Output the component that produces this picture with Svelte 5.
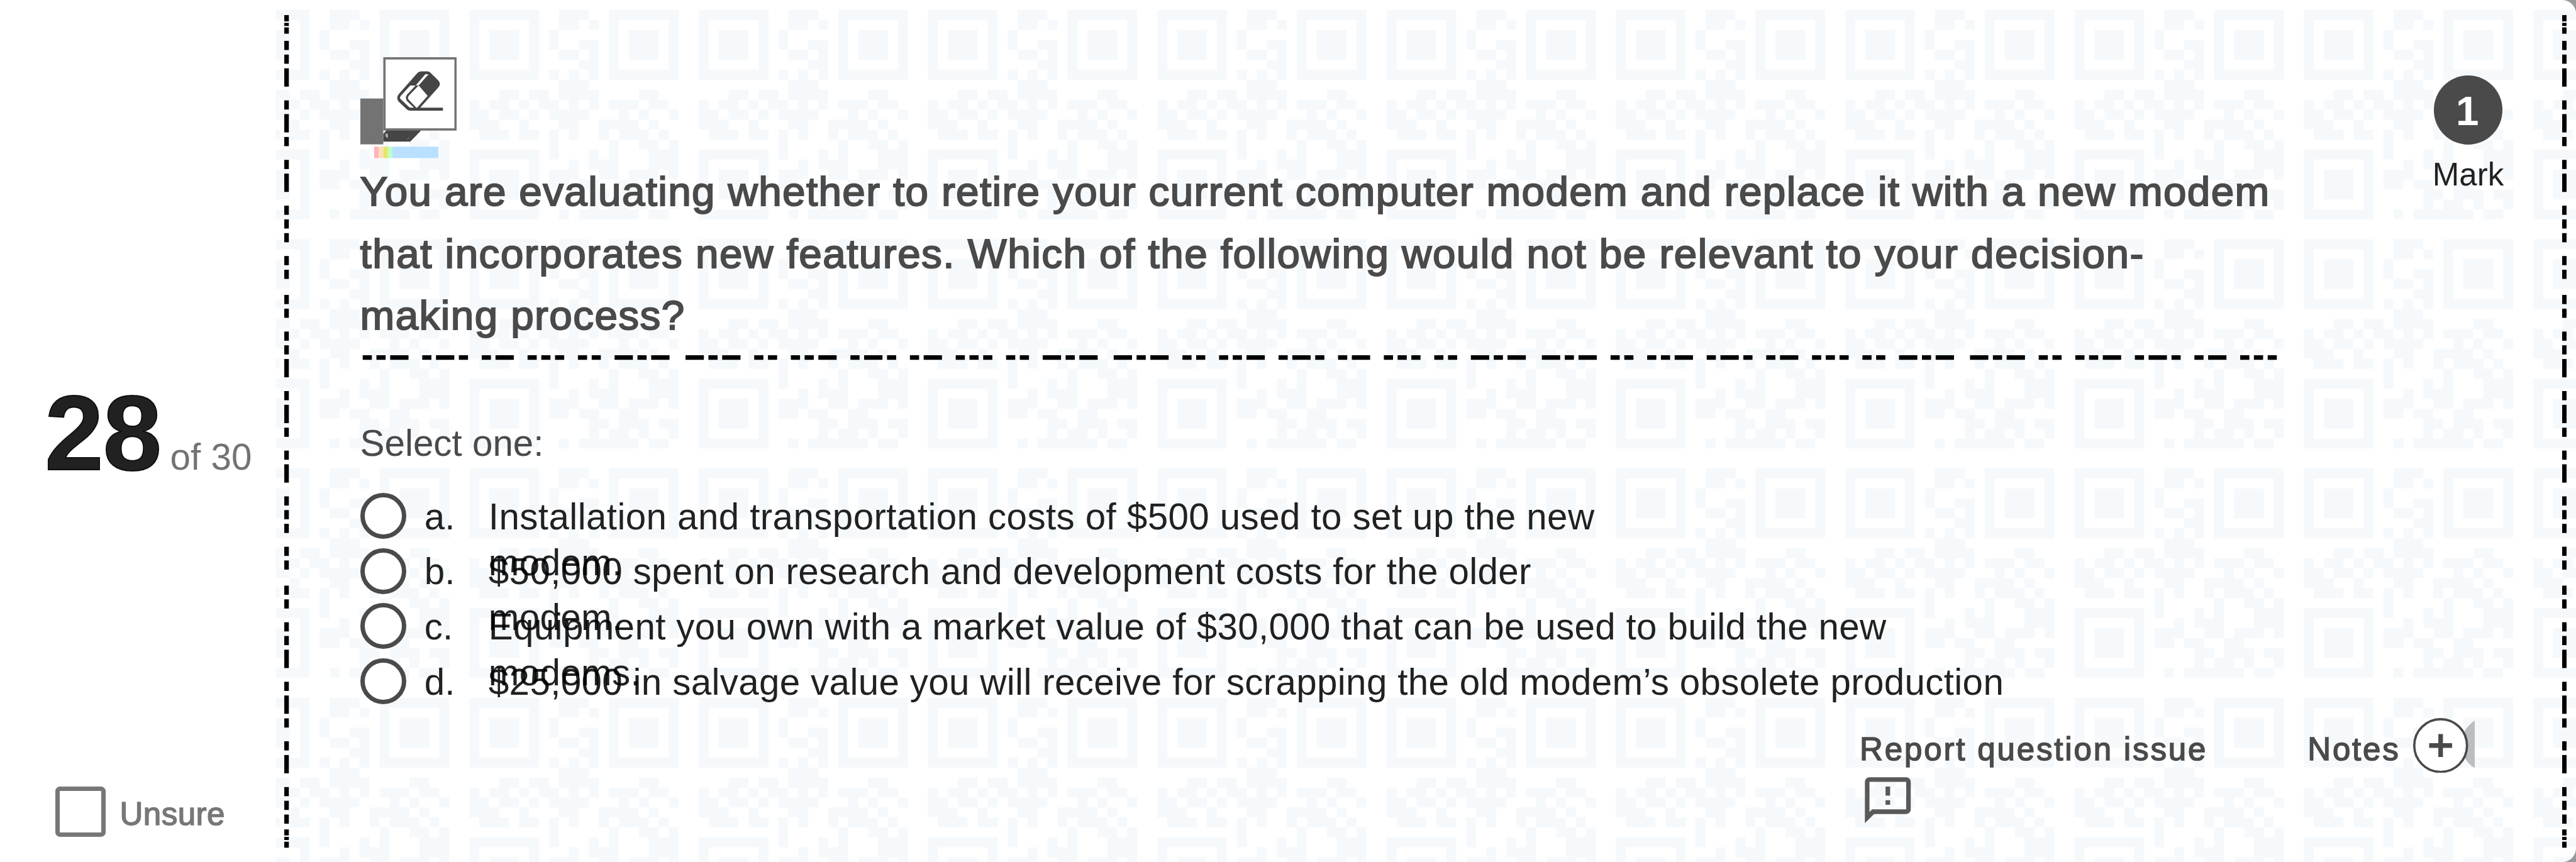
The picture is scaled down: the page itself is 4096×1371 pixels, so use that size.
<script lang="ts">
  interface Dash {
    at: number;
    size: number;
  }

  interface Option {
    letter: string;
    lines: string[];
  }

  const options: Option[] = [
    { letter: 'a', lines: ['Installation and transportation costs of $500 used to set up the new', 'modem.'] },
    { letter: 'b', lines: ['$50,000 spent on research and development costs for the older', 'modem.'] },
    { letter: 'c', lines: ['Equipment you own with a market value of $30,000 that can be used to build the new', 'modems.'] },
    { letter: 'd', lines: ['$25,000 in salvage value you will receive for scrapping the old modem’s obsolete production'] }
  ];

  let selected = $state('');
  let unsure = $state(false);

  // Dark modules of the background code: [from, to) column runs for rows 1..21
  const runs: number[][][] = [
    [[10, 13]],
    [[10, 12], [13, 14]],
    [[9, 10]],
    [[9, 10], [12, 14]],
    [[10, 12], [13, 14]],
    [[12, 14]],
    [[9, 10], [11, 12], [13, 14]],
    [[10, 13]],
    [[4, 6], [7, 9], [10, 14], [18, 20]],
    [[1, 2], [3, 5], [6, 7], [8, 10], [11, 12], [13, 14], [15, 18], [19, 21]],
    [[1, 3], [4, 6], [7, 8], [9, 13], [16, 17], [18, 19], [21, 22]],
    [[1, 4], [6, 7], [10, 12], [14, 18], [19, 20]],
    [[2, 5], [6, 8], [9, 10], [11, 12], [14, 15], [16, 19], [20, 21]],
    [[9, 10], [15, 16], [18, 20], [21, 22]],
    [[9, 10], [13, 14], [15, 16], [19, 22]],
    [[11, 12], [13, 16], [19, 22]],
    [[9, 12], [14, 16], [17, 20], [21, 22]],
    [[9, 11], [12, 14], [16, 18]],
    [[13, 15], [16, 19], [20, 22]],
    [[13, 14], [15, 17], [18, 19], [21, 22]],
    [[10, 11], [12, 18], [19, 21]]
  ];

  const finders = [[1, 1], [15, 1], [1, 15]];

  const modules =
    runs.map((row, i) => row.map(([a, b]) => `M${a} ${i + 1}H${b}V${i + 2}H${a}Z`).join('')).join('') +
    finders
      .map(([x, y]) => `M${x} ${y}h7v7h-7zM${x + 1} ${y + 1}v5h5v-5zM${x + 2} ${y + 2}h3v3h-3z`)
      .join('');

  // Repeats a code of dots (16) and dashes (32) from `start`, keeping what fits in the range
  function morse(code: string, start: number, min: number, max: number): Dash[] {
    const out: Dash[] = [];
    let pos = start;
    while (pos < max) {
      for (const ch of code) {
        if (ch === ' ') {
          pos += 16;
          continue;
        }
        const size = ch === '-' ? 32 : 16;
        if (pos >= min && pos + size <= max) out.push({ at: pos, size });
        pos += size + 8;
      }
      pos += 20;
    }
    return out;
  }

  const ruleDashes = morse('-.- .. ..- .-. .- ... .. -.-', -184, 0, 3346);

  const edgeDashes: Dash[] = [
    { at: 25, size: 11 },
    { at: 38.5, size: 5.5 },
    { at: 46.5, size: 11 },
    ...morse('.. ..- .-. .- ... ..', 6, 60, 1440),
    { at: 1448, size: 10.5 },
    { at: 1461, size: 5.5 },
    { at: 1469.5, size: 10.5 }
  ];
</script>

{#snippet edge()}
  <svg class="edge" viewBox="0 0 8 1504" aria-hidden="true">
    {#each edgeDashes as d}
      <rect x="0" y={d.at} width="8" height={d.size} />
    {/each}
  </svg>
{/snippet}

<div class="screen">
  <div class="card">
    <aside class="info">
      <div class="counter">
        <strong>28</strong>
        <span>of 30</span>
      </div>
      <button class="unsure" aria-pressed={unsure} onclick={() => (unsure = !unsure)}>
        <span class="box"></span>
        <span class="unsure-label">Unsure</span>
      </button>
    </aside>

    <main class="sheet">
      <svg class="backdrop" aria-hidden="true" viewBox="480 0 4012 1504">
        <defs>
          <pattern id="code" width="400" height="400" patternUnits="userSpaceOnUse">
            <path d={modules} transform="scale(17.3913)" />
          </pattern>
        </defs>
        <rect x="480" y="0" width="4012" height="1504" fill="url(#code)" />
      </svg>

      {@render edge()}

      <div class="content">
        <div class="top">
          <section class="question">
            <svg class="eraser" viewBox="0 0 168 176" aria-label="Strike out tool">
              <rect x="0" y="72" width="40" height="80" fill="#737373" />
              <g transform="translate(-28 -20) scale(.33333)">
                <path fill="#454545" d="M204 462L222 440H405L345 502H204Z" />
                <path fill="#aaa" d="M215 462Q221 456 228 461V482Q220 482 215 473Z" />
                <path fill="none" stroke="#777" stroke-width="4" d="M329 491L340 480" />
              </g>
              <rect x="42" y="2" width="124" height="124" fill="#fff" stroke="#737373" stroke-width="4" />
              <g transform="translate(-28 -20) scale(.33333)">
                <path fill="#454545" d="M402 134H434Q444 134 452 142L492 182Q508 201 492 218L397 324H516V340H345Q335 340 328 334L284 292Q270 273 284 254L382 143Q390 134 402 134Z" />
                <path fill="#fff" d="M345 208H373L329 255Q315 272 329 290L364 324H349Q342 324 337 319L295 280Q288 272 295 262Z" />
                <path fill="#fff" d="M424 149H441L389 207H374Z" />
                <path fill="#fff" d="M387 210H391L436 262L381 324H377L338 284Q328 273 338 261Z" />
              </g>
              <rect x="24" y="156" width="8" height="20" fill="#ffb3ba" />
              <rect x="32" y="156" width="8" height="20" fill="#ffdfba" />
              <rect x="40" y="156" width="8" height="20" fill="#e6e666" />
              <rect x="48" y="156" width="8" height="20" fill="#baffc9" />
              <rect x="56" y="156" width="80" height="20" fill="#b9e0ff" />
            </svg>
            <h1>
              <span class="q1">You are evaluating whether to retire your current computer modem and replace it with a new modem</span>
              <span class="q2">that incorporates new features. Which of the following would not be relevant to your decision-</span>
              <span class="q3">making process?</span>
            </h1>
            <svg class="rule" viewBox="0 0 3346 8" aria-hidden="true">
              {#each ruleDashes as d}
                <rect x={d.at + 1} y="0" width={d.size} height="8" />
              {/each}
            </svg>
            <p class="prompt">Select one:</p>
            <div class="options">
              {#each options as option}
                <button class="option" onclick={() => (selected = option.letter)}>
                  <span class="radio" class:on={selected === option.letter}></span>
                  <span class="letter">{option.letter}.</span>
                  <span class="answer">
                    {#each option.lines as line}
                      <span class="line">{line}</span>
                    {/each}
                  </span>
                </button>
              {/each}
            </div>
          </section>

          <div class="mark">
            <span class="score">1</span>
            <span class="mark-label">Mark</span>
          </div>
        </div>

        <footer>
          <div class="report">
            <span class="report-label">Report question issue</span>
            <svg viewBox="0 0 24 24" aria-hidden="true">
              <path d="M20 2H4c-1.1 0-1.99.9-1.99 2L2 22l4-4h14c1.1 0 2-.9 2-2V4c0-1.1-.9-2-2-2zm0 14H5.17L4 17.17V4h16v12zm-9-4h2v2h-2zm0-6h2v4h-2z" />
            </svg>
          </div>
          <div class="notes">
            <span class="notes-label">Notes</span>
            <svg viewBox="0 0 108 96" aria-hidden="true">
              <circle cx="132" cy="46" r="48" fill="#bbbdbe" />
              <circle cx="48" cy="48" r="46" fill="#fff" stroke="#4a4a4a" stroke-width="4" />
              <path fill="#4a4a4a" d="M44 28h8v16h16v8h-16v16h-8v-16h-16v-8h16z" />
            </svg>
          </div>
        </footer>
      </div>

      {@render edge()}
    </main>
  </div>
</div>

<style>
  :global(html) {
    font-size: 9.11843px;
  }

  :global(body) {
    margin: 0;
    overflow: hidden;
  }

  .screen {
    width: 4096px;
    height: 1371px;
    overflow: hidden;
    background: #999;
    font-family: "Helvetica Neue", "Liberation Sans", Arial, sans-serif;
    color: rgba(0, 0, 0, 0.87);
  }

  .card {
    display: flex;
    width: 100%;
    height: 100%;
    background: #fff;
    border-radius: 0 2.4rem 2.4rem 0;
    overflow: hidden;
  }

  button {
    background: none;
    border: none;
    padding: 0;
    font-family: inherit;
    color: inherit;
    text-align: left;
    cursor: pointer;
  }

  span {
    white-space: nowrap;
  }

  /* Left column */
  .info {
    width: 48rem;
    flex-shrink: 0;
    box-sizing: border-box;
    padding-top: 66.4rem;
  }

  .counter {
    display: flex;
    align-items: baseline;
    height: 18.4rem;
    padding-left: 7.8rem;
    gap: 1.6rem;
  }

  .counter strong {
    font-size: 18.5rem;
    line-height: 18.4rem;
    letter-spacing: -0.15rem;
    -webkit-text-stroke: 0.2rem currentColor;
  }

  .counter span {
    font-size: 6.4rem;
    color: #737373;
  }

  .unsure {
    display: flex;
    align-items: flex-start;
    margin: 52.4rem 0 0 9.6rem;
    gap: 2.5rem;
    color: #777;
  }

  .box {
    box-sizing: border-box;
    width: 8.8rem;
    height: 8.8rem;
    border: 0.8rem solid #777;
    border-radius: 0.8rem;
  }

  .unsure-label {
    font-size: 5.6rem;
    line-height: 8rem;
    padding-top: 0.9rem;
    letter-spacing: 0.05rem;
    -webkit-text-stroke: 0.17rem currentColor;
  }

  /* Patterned sheet */
  .sheet {
    position: relative;
    flex: 1;
    display: flex;
    padding: 0 1.6rem;
  }

  .backdrop {
    position: absolute;
    inset: 0;
    width: 100%;
    height: 100%;
    fill: #f5f9fc;
  }

  .edge {
    position: relative;
    width: 0.8rem;
    height: 150.4rem;
    flex-shrink: 0;
  }

  .content {
    position: relative;
    flex: 1;
    min-width: 0;
    padding: 10rem 0 0 12.4rem;
  }

  .top {
    display: flex;
    height: 112.8rem;
  }

  .question {
    width: 334.6rem;
    flex-shrink: 0;
  }

  .eraser {
    display: block;
    width: 16.8rem;
    height: 17.6rem;
  }

  h1 {
    margin: 0.5rem 0 0;
    font-size: 7.2rem;
    font-weight: 400;
    line-height: 10.8rem;
    color: #4a4a4a;
    -webkit-text-stroke: 0.22rem currentColor;
  }

  h1 span {
    display: block;
  }

  .q1 {
    letter-spacing: 0.146rem;
  }

  .q2 {
    letter-spacing: 0.16rem;
  }

  .q3 {
    letter-spacing: 0.153rem;
  }

  .rule {
    display: block;
    width: 334.6rem;
    height: 0.8rem;
    margin-top: 1.5rem;
  }

  .prompt {
    margin: 10.6rem 0 0;
    font-size: 6.4rem;
    line-height: 8rem;
    color: #4a4a4a;
  }

  .options {
    display: flex;
    flex-direction: column;
    gap: 1.6rem;
    margin-top: 4.6rem;
  }

  .option {
    display: flex;
    height: 8rem;
    font-size: 6.4rem;
    line-height: 8rem;
  }

  .radio {
    box-sizing: border-box;
    width: 8rem;
    height: 8rem;
    flex-shrink: 0;
    border: 0.8rem solid #4a4a4a;
    border-radius: 50%;
    background: #fff;
  }

  .radio.on {
    background: radial-gradient(#4a4a4a 45%, #fff 48%);
  }

  .letter {
    width: 11.2rem;
    margin: 0.2rem 0 0 3.2rem;
    flex-shrink: 0;
  }

  .answer {
    margin-top: 0.2rem;
    letter-spacing: 0.036rem;
  }

  .option:first-child .answer {
    letter-spacing: 0.043rem;
  }

  .line {
    display: block;
  }

  .mark {
    display: flex;
    flex-direction: column;
    align-items: center;
    width: 14rem;
    margin: 3.2rem 0 0 26rem;
  }

  .score {
    width: 12rem;
    height: 12rem;
    border-radius: 50%;
    background: #4a4a4a;
    color: #fff;
    font-size: 7.2rem;
    font-weight: 700;
    line-height: 12.4rem;
    text-align: center;
    text-indent: -0.3rem;
  }

  .mark-label {
    margin-top: 1.3rem;
    font-size: 5.6rem;
    line-height: 8rem;
  }

  /* Bottom actions */
  footer {
    display: flex;
    align-items: flex-start;
    margin-top: 2.4rem;
    padding-left: 261.5rem;
    font-size: 5.6rem;
    line-height: 8rem;
    letter-spacing: 0.31rem;
    color: #4a4a4a;
    -webkit-text-stroke: 0.17rem currentColor;
  }

  .report {
    display: flex;
    flex-direction: column;
    width: 78.1rem;
    padding-top: 1.6rem;
  }

  .report svg {
    width: 9.6rem;
    height: 9.6rem;
    margin-left: 0.1rem;
    fill: #595959;
  }

  .notes {
    display: flex;
    align-items: flex-start;
  }

  .notes-label {
    width: 18.4rem;
    padding-top: 1.6rem;
  }

  .notes svg {
    width: 10.8rem;
    height: 9.6rem;
  }
</style>
